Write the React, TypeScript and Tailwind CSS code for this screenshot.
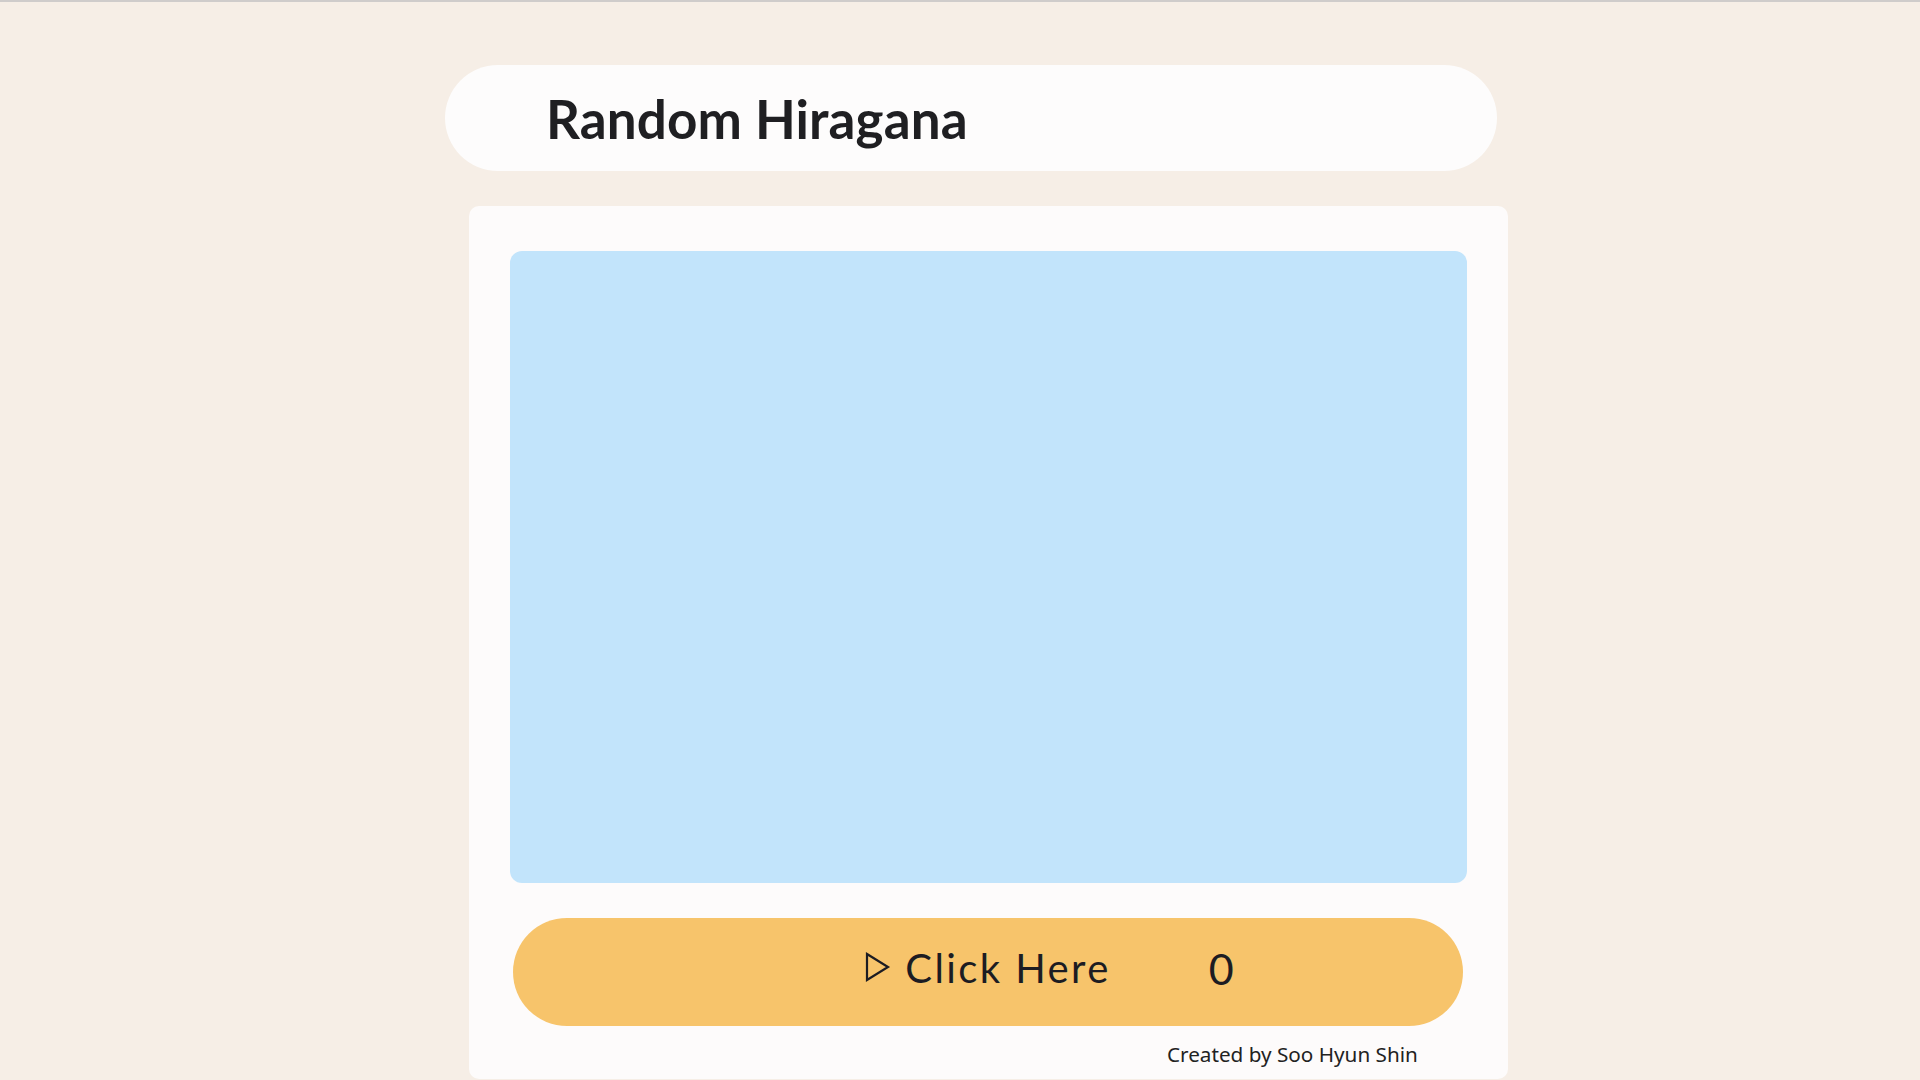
export default function App() {
  return (
    <div
      className="min-h-[1080px] w-full bg-[#f6eee6] border-t-2 border-[#cfcccb] overflow-hidden"
      style={{ fontFamily: "Lato, 'Noto Sans', sans-serif" }}
    >
      <header className="ml-[445px] mt-[63px] flex h-[106px] w-[1052px] items-center rounded-[53px] bg-[#fdfcfc] pl-[101px]">
        <h1 className="text-[53px] font-bold leading-none tracking-[0.1px] text-[#1f1f22]">
          Random Hiragana
        </h1>
      </header>

      <main className="ml-[469px] mt-[35px] w-[1039px] rounded-[10px] bg-[#fdfbfb] px-[41px] pt-[45px] pb-[10px]">
        <div className="h-[632px] w-full rounded-[12px] bg-[#c2e4fb]" />

        <button
          type="button"
          className="mx-[3px] mt-[35px] grid h-[108px] w-[950px] grid-cols-[1fr_auto_1fr] items-center rounded-full bg-[#f7c46b] pb-[8px] text-[#1c1c22]"
        >
          <span />
          <span className="flex items-center gap-[14px]">
            <svg width="26" height="30" viewBox="0 0 26 30" className="mt-[-2px]">
              <path d="M2 2 L23 15 L2 28 Z" fill="none" stroke="#1c1c22" strokeWidth="2.2" strokeLinejoin="miter" />
            </svg>
            <span className="text-[40px] leading-none tracking-[2.4px]">Click Here</span>
          </span>
          <span className="pl-[98px] text-left text-[43px] leading-none">0</span>
        </button>

        <p
          className="mt-[13px] pl-[657px] text-[20.7px] leading-[30px] text-[#222]"
          style={{ fontFamily: "'Noto Sans', sans-serif" }}
        >
          Created by Soo Hyun Shin
        </p>
      </main>
    </div>
  )
}
